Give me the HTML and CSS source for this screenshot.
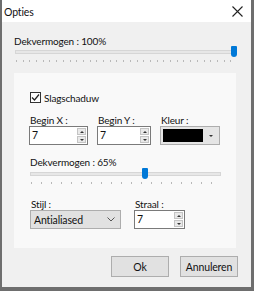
FILE: index.html
```html
<!DOCTYPE html>
<html lang="en">
<head>
  <meta charset="UTF-8">
  <title>Opties</title>
  <link rel="stylesheet" href="styles.css">
</head>
<body>
  <div class="window">
    <div class="titlebar">
      <span class="title">Opties</span>
      <svg class="close" width="11" height="11" viewBox="0 0 11 11"><path d="M0.5 0.5 L10.5 10.5 M10.5 0.5 L0.5 10.5" stroke="#222" stroke-width="1.1"/></svg>
    </div>

    <div class="content">
      <div class="label">Dekvermogen : 100%</div>
      <div class="slider wide">
        <div class="track"></div>
        <div class="thumb" style="left: 100%;"></div>
        <div class="ticks"></div>
      </div>

      <div class="panel">
        <label class="check">
          <span class="box">
            <svg width="9" height="9" viewBox="0 0 9 9"><path d="M1 4.5 L3.5 7 L8 1.5" fill="none" stroke="#222" stroke-width="1.2"/></svg>
          </span>
          Slagschaduw
        </label>

        <div class="row">
          <div class="field">
            <div class="label">Begin X :</div>
            <div class="spin w-x">
              <span class="value">7</span>
              <span class="arrows"><i class="up"></i><i class="down"></i></span>
            </div>
          </div>
          <div class="field">
            <div class="label">Begin Y :</div>
            <div class="spin w-y">
              <span class="value">7</span>
              <span class="arrows"><i class="up"></i><i class="down"></i></span>
            </div>
          </div>
          <div class="field">
            <div class="label">Kleur :</div>
            <div class="color">
              <span class="swatch"></span>
              <span class="drop"><i class="down"></i></span>
            </div>
          </div>
        </div>

        <div class="label op">Dekvermogen : 65%</div>
        <div class="slider narrow">
          <div class="track"></div>
          <div class="thumb" style="left: 62%;"></div>
          <div class="ticks"></div>
        </div>

        <div class="row second">
          <div class="field">
            <div class="label">Stijl :</div>
            <div class="combo">
              <span>Antialiased</span>
              <svg width="8" height="5" viewBox="0 0 8 5"><path d="M0.5 0.5 L4 4 L7.5 0.5" fill="none" stroke="#555" stroke-width="1"/></svg>
            </div>
          </div>
          <div class="field">
            <div class="label">Straal :</div>
            <div class="spin w-r">
              <span class="value">7</span>
              <span class="arrows"><i class="up"></i><i class="down"></i></span>
            </div>
          </div>
        </div>
      </div>

      <div class="buttons">
        <button>Ok</button>
        <button>Annuleren</button>
      </div>
    </div>
  </div>
</body>
</html>
```

FILE: styles.css
```css
body {
  margin: 0;
  font-family: Lato, "Noto Sans", sans-serif;
  font-size: 10px;
  letter-spacing: -0.15px;
  color: #111;
}

.window {
  width: 249px;
  height: 287px;
  border-left: 2px solid #6e6e6e;
  border-right: 3px solid #6e6e6e;
  border-bottom: 4px solid #6e6e6e;
  background: #f0f0f0;
  display: flex;
  flex-direction: column;
}

.titlebar {
  height: 22px;
  flex: none;
  background: #fff;
  display: flex;
  align-items: center;
  justify-content: space-between;
  padding: 1px 8px 0 2px;
  box-sizing: border-box;
}

.title {
  font-size: 10.5px;
}

.content {
  padding: 13px 15px 0 12px;
  display: flex;
  flex-direction: column;
}

.label {
  line-height: 12px;
  white-space: nowrap;
}

.slider {
  position: relative;
  height: 16px;
  margin-top: -1px;
  flex: none;
}

.slider .track {
  height: 2px;
  margin-top: 4px;
  background: #e7e7e7;
  border: 1px solid #d6d6d6;
}

.slider .thumb {
  position: absolute;
  top: 0;
  width: 6px;
  height: 11px;
  margin-left: -6px;
  background: #0078d7;
  border-radius: 1px 1px 3px 3px;
}

.slider .ticks {
  height: 2px;
  margin: 6px 1px 0;
  background: repeating-linear-gradient(to right, #b8b8b8 0 1px, transparent 1px 6.7px);
}

.slider.wide {
  margin-left: 1px;
  margin-right: -1px;
}

.slider.narrow {
  margin-top: 0;
}

.slider.narrow .ticks {
  background: repeating-linear-gradient(to right, #b8b8b8 0 1px, transparent 1px 10px);
}

.panel {
  margin-top: 11px;
  background: #f9f9f9;
  padding: 19px 15px 19px 16px;
  display: flex;
  flex-direction: column;
}

.check {
  display: flex;
  align-items: center;
  gap: 3px;
  height: 11px;
}

.box {
  width: 9px;
  height: 9px;
  border: 1px solid #333;
  background: #fff;
  display: flex;
  align-items: center;
  justify-content: center;
}

.row {
  display: flex;
  gap: 9px;
  margin-top: 11px;
  margin-left: -1px;
}

.row.second {
  gap: 13px;
  margin-top: 14px;
  margin-left: 0;
}

.field {
  display: flex;
  flex-direction: column;
}

.field .label {
  padding-left: 1px;
}

.spin {
  height: 17px;
  border: 1px solid #7a7a7a;
  background: #fff;
  display: flex;
  justify-content: space-between;
  align-items: stretch;
}

.spin .value {
  padding-left: 2px;
  line-height: 17px;
  font-size: 10.5px;
}

.w-x { width: 57px; }
.w-y { width: 52px; }
.w-r { width: 49px; }

.arrows {
  width: 9px;
  margin: 1px 1px 1px 0;
  display: flex;
  flex-direction: column;
  gap: 1px;
}

.arrows i {
  flex: 1;
  background: #e9e9e9;
  border: 1px solid #c4c4c4;
  position: relative;
}

.up::after, .down::after {
  content: '';
  position: absolute;
  left: 50%;
  top: 50%;
  margin: -1px 0 0 -2px;
  border-left: 2px solid transparent;
  border-right: 2px solid transparent;
}

.up::after {
  border-bottom: 2px solid #333;
}

.down::after {
  border-top: 2px solid #333;
}

.color {
  width: 54px;
  height: 13px;
  border: 1px solid #adadad;
  background: #e5e5e5;
  display: flex;
  padding: 2px;
  gap: 2px;
}

.swatch {
  flex: 1;
  background: #000;
}

.drop {
  width: 12px;
  position: relative;
  display: block;
}

.drop i {
  position: absolute;
  inset: 0;
}

.label.op {
  margin-top: 11px;
}

.combo {
  width: 81px;
  height: 17px;
  border: 1px solid #adadad;
  background: #e1e1e1;
  display: flex;
  align-items: center;
  justify-content: space-between;
  padding: 0 5px 0 3px;
  font-size: 10.5px;
}

.buttons {
  display: flex;
  justify-content: flex-end;
  gap: 11px;
  margin-top: 8px;
  margin-right: -2px;
}

button {
  font-family: inherit;
  font-size: 10.5px;
  letter-spacing: -0.15px;
  color: #111;
  width: 58px;
  height: 21px;
  padding: 0;
  background: #e1e1e1;
  border: 1px solid #adadad;
}
```
